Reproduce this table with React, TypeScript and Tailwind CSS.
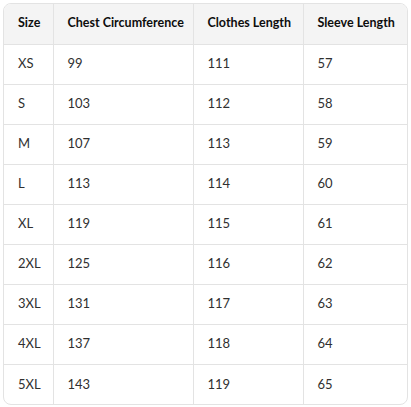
import React from 'react';

const rows: [string, number, number, number][] = [
  ['XS', 99, 111, 57],
  ['S', 103, 112, 58],
  ['M', 107, 113, 59],
  ['L', 113, 114, 60],
  ['XL', 119, 115, 61],
  ['2XL', 125, 116, 62],
  ['3XL', 131, 117, 63],
  ['4XL', 137, 118, 64],
  ['5XL', 143, 119, 65],
];

const headers = ['Size', 'Chest Circumference', 'Clothes Length', 'Sleeve Length'];

export default function App() {
  return (
    <div className="bg-white w-[411px] h-[407px] pt-[3px] pl-[3px]" style={{ fontFamily: 'Lato, "Noto Sans", sans-serif' }}>
      <div className="w-[405px] rounded-lg border border-[#e3e3e3] overflow-hidden">
        <table className="w-full table-fixed border-collapse text-[13px] text-left">
          <colgroup>
            <col className="w-[49px]" />
            <col className="w-[140px]" />
            <col className="w-[110px]" />
            <col />
          </colgroup>
          <thead>
            <tr className="bg-[#f4f4f4] h-[40px]">
              {headers.map((h, i) => (
                <th
                  key={h}
                  className={`font-bold text-[12.5px] whitespace-nowrap text-[#0d0d0d] pl-[14px] border-b border-[#e3e3e3] ${i < 3 ? 'border-r' : ''}`}
                >
                  {h}
                </th>
              ))}
            </tr>
          </thead>
          <tbody>
            {rows.map((r, ri) => (
              <tr key={r[0]} className="h-[40px] text-[#303030]">
                {r.map((c, i) => (
                  <td
                    key={i}
                    className={`pl-[14px] border-[#e3e3e3] ${i < 3 ? 'border-r' : ''} ${ri < rows.length - 1 ? 'border-b' : ''}`}
                  >
                    {c}
                  </td>
                ))}
              </tr>
            ))}
          </tbody>
        </table>
      </div>
    </div>
  );
}
